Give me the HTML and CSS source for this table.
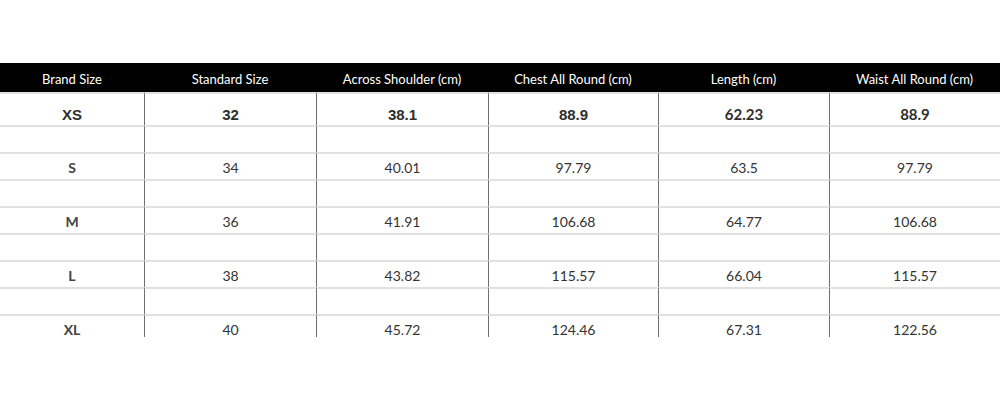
FILE: index.html
```html
<!DOCTYPE html>
<html lang="en">
<head>
<meta charset="utf-8">
<title>Size Chart</title>
<link rel="stylesheet" href="styles.css">
</head>
<body>
<div class="chart">
  <table class="sizes">
    <colgroup>
      <col class="c1"><col class="c2"><col class="c3"><col class="c4"><col class="c5"><col class="c6">
    </colgroup>
    <thead>
      <tr>
        <th>Brand Size</th>
        <th>Standard Size</th>
        <th>Across Shoulder (cm)</th>
        <th>Chest All Round (cm)</th>
        <th>Length (cm)</th>
        <th>Waist All Round (cm)</th>
      </tr>
    </thead>
    <tbody>
      <tr class="row first">
        <td class="arial">XS</td><td class="arial">32</td><td class="arial">38.1</td><td class="arial">88.9</td><td>62.23</td><td>88.9</td>
      </tr>
      <tr class="row blank"><td></td><td></td><td></td><td></td><td></td><td></td></tr>
      <tr class="row">
        <td class="sz">S</td><td>34</td><td>40.01</td><td>97.79</td><td>63.5</td><td>97.79</td>
      </tr>
      <tr class="row blank"><td></td><td></td><td></td><td></td><td></td><td></td></tr>
      <tr class="row">
        <td class="sz">M</td><td>36</td><td>41.91</td><td>106.68</td><td>64.77</td><td>106.68</td>
      </tr>
      <tr class="row blank"><td></td><td></td><td></td><td></td><td></td><td></td></tr>
      <tr class="row">
        <td class="sz">L</td><td>38</td><td>43.82</td><td>115.57</td><td>66.04</td><td>115.57</td>
      </tr>
      <tr class="row blank"><td></td><td></td><td></td><td></td><td></td><td></td></tr>
      <tr class="row">
        <td class="sz">XL</td><td>40</td><td>45.72</td><td>124.46</td><td>67.31</td><td>122.56</td>
      </tr>
    </tbody>
  </table>
</div>
</body>
</html>
```

FILE: styles.css
```css
html, body {
  margin: 0;
  padding: 0;
  background: #ffffff;
}

.chart {
  margin-top: 63px;
  width: 1000px;
  height: 274px;
  overflow: hidden;
}

.sizes {
  width: 1000px;
  table-layout: fixed;
  border-collapse: separate;
  border-spacing: 0;
  font-family: Lato, "Open Sans", sans-serif;
}

.c1 { width: 144px; }
.c2 { width: 172px; }
.c3 { width: 172px; }
.c4 { width: 170px; }
.c5 { width: 171px; }
.c6 { width: 171px; }

.sizes th {
  background: #000000;
  color: #ffffff;
  font-weight: 400;
  font-size: 13px;
  height: 29px;
  padding: 2px 0 0 0;
  box-sizing: border-box;
  text-align: center;
  vertical-align: middle;
  line-height: 16px;
}

.sizes td {
  border-top: 2px solid #e1e1e1;
  height: 27px;
  box-sizing: border-box;
  padding: 5px 0 0 0;
  text-align: center;
  vertical-align: top;
  color: #333333;
  font-size: 14px;
  line-height: 17px;
}

.sizes td + td {
  border-left: 1px solid #6f6f6f;
}

.sizes .first td {
  height: 33px;
  padding-top: 12px;
  font-size: 15px;
  font-weight: 700;
  color: #2e2e2e;
}

.sizes .first td.arial {
  font-family: "Liberation Sans", Arial, sans-serif;
}

.sizes td.sz {
  font-weight: 700;
  color: #444444;
}
```
